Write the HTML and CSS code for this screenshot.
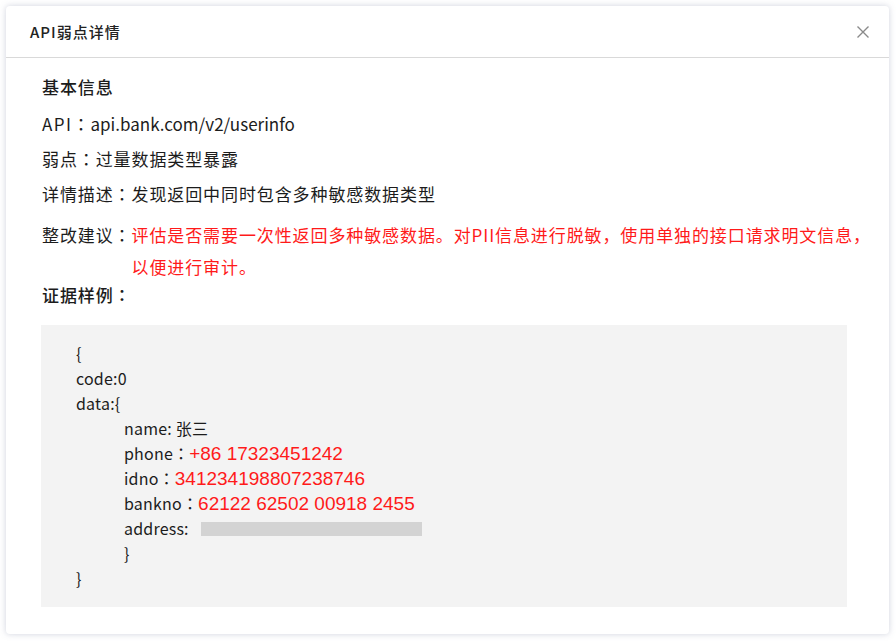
FILE: index.html
```html
<!DOCTYPE html>
<html lang="zh-CN">
<head>
<meta charset="utf-8">
<title>API弱点详情</title>
<link rel="stylesheet" href="styles.css">
</head>
<body>
<div class="page">
  <div class="modal">
    <div class="modal-header">
      <div class="modal-title">API弱点详情</div>
      <svg class="close" width="14" height="14" viewBox="0 0 14 14"><path d="M1.5 1.5L12.5 12.5M12.5 1.5L1.5 12.5" stroke="#8a8a8a" stroke-width="1.4" fill="none"/></svg>
    </div>
    <div class="modal-body">
      <div class="section-title">基本信息</div>
      <div class="row"><span class="label"><span class="latin-label">API</span><span class="colon" lang="ja">：</span></span><span class="value latin">api.bank.com/v2/userinfo</span></div>
      <div class="row"><span class="label">弱点<span class="colon" lang="ja">：</span></span><span class="value">过量数据类型暴露</span></div>
      <div class="row row-desc"><span class="label">详情描述<span class="colon" lang="ja">：</span></span><span class="value">发现返回中同时包含多种敏感数据类型</span></div>
      <div class="row row-advice"><span class="label">整改建议<span class="colon" lang="ja">：</span></span><span class="value red">评估是否需要一次性返回多种敏感数据。对PII信息进行脱敏，使用单独的接口请求明文信息，以便进行审计。</span></div>
      <div class="evidence-title">证据样例<span class="colon" lang="ja">：</span></div>
      <div class="code">
        <div class="line">{</div>
        <div class="line">code:0</div>
        <div class="line">data:{</div>
        <div class="line indent">name: 张三</div>
        <div class="line indent">phone<span class="colon" lang="ja">：</span><span class="num">+86 17323451242</span></div>
        <div class="line indent">idno<span class="colon" lang="ja">：</span><span class="num">341234198807238746</span></div>
        <div class="line indent">bankno<span class="colon" lang="ja">：</span><span class="num">62122 62502 00918 2455</span></div>
        <div class="line indent">address: <span class="mask"></span></div>
        <div class="line indent">}</div>
        <div class="line">}</div>
      </div>
    </div>
  </div>
</div>
</body>
</html>
```

FILE: styles.css
```css
html, body {
  margin: 0;
  padding: 0;
  background: #ffffff;
}
body {
  font-family: "Noto Sans CJK SC", "Noto Sans", sans-serif;
  color: #1c1c1c;
}
.page {
  padding: 6px 7px 7px 6px;
}
.modal {
  background: #fff;
  border-radius: 4px;
  box-shadow: 0 0 6px rgba(120, 130, 160, 0.35);
  height: 628px;
  box-sizing: border-box;
}
.modal-header {
  height: 51px;
  border-bottom: 1px solid #d9d9d9;
  display: flex;
  align-items: center;
  justify-content: space-between;
  padding: 0 19px 0 24px;
}
.modal-title {
  font-size: 15px;
  font-weight: 500;
  color: #222;
  letter-spacing: 1px;
}
.close {
  display: block;
}
.modal-body {
  padding: 11px 6px 0 35px;
  font-size: 17px;
  letter-spacing: 0.9px;
}
.colon {
  font-family: "Noto Sans CJK JP", sans-serif;
}
.latin {
  letter-spacing: 0;
}
.latin-label {
  letter-spacing: 1.5px;
}
.section-title {
  line-height: 36px;
  margin-bottom: 1px;
  font-weight: 500;
  padding-left: 1px;
}
.row {
  display: flex;
  line-height: 35px;
  padding-left: 1px;
}
.label {
  flex: none;
}
.value {
  flex: 1;
}
.row-desc {
  margin-bottom: 8px;
}
.row-advice {
  line-height: 32px;
}
.red {
  color: #ff1a1a;
}
.evidence-title {
  line-height: 24px;
  font-weight: 500;
  padding-left: 1px;
}
.code {
  margin-top: 18px;
  margin-right: 36px;
  background: #f3f3f3;
  padding: 16px 35px 16px;
  font-size: 16px;
  letter-spacing: 0.2px;
}
.line {
  line-height: 25px;
  height: 25px;
}
.indent {
  padding-left: 48px;
}
.num {
  font-family: "Liberation Sans", sans-serif;
  font-size: 19px;
  color: #ff1a1a;
  letter-spacing: 0;
}
.mask {
  display: inline-block;
  width: 221px;
  height: 14px;
  background: #d3d3d3;
  vertical-align: -1px;
  margin-left: 8px;
}
```
